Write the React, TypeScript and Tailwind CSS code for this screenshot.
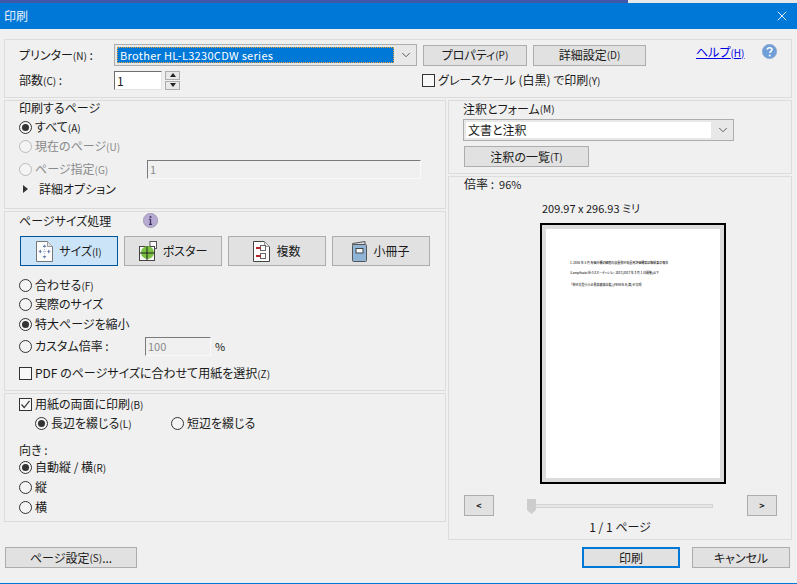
import type { ReactNode } from "react";
import { ChevronDown, X } from "lucide-react";

const Key = ({ children }: { children: ReactNode }) => (
  <span className="text-[10px]">{children}</span>
);

const Radio = ({ checked, disabled }: { checked?: boolean; disabled?: boolean }) => (
  <span
    className={`flex h-[13px] w-[13px] shrink-0 items-center justify-center rounded-full border bg-[#f4f4f4] ${
      disabled ? "border-[#bcbcbc]" : "border-[#333333]"
    }`}
  >
    {checked && <span className="h-[7px] w-[7px] rounded-full bg-[#333333]" />}
  </span>
);

const Checkbox = ({ checked }: { checked?: boolean }) => (
  <span className="flex h-[13px] w-[13px] shrink-0 items-center justify-center border border-[#333333] bg-[#f8f8f8]">
    {checked && (
      <svg width="11" height="11" viewBox="0 0 11 11" fill="none">
        <path d="M1.5 5.5 4.2 8.5 9.5 1.8" stroke="#333333" strokeWidth="1.2" />
      </svg>
    )}
  </span>
);

const Button = ({
  children,
  className,
  primary,
}: {
  children: ReactNode;
  className: string;
  primary?: boolean;
}) => (
  <button
    className={`flex items-center justify-center bg-[#e1e1e1] text-[#1a1a1a] ${
      primary ? "border-2 border-[#0078d7]" : "border border-[#adadad]"
    } ${className}`}
  >
    {children}
  </button>
);

const SizeIcon = () => (
  <svg width="17" height="21" viewBox="0 0 17 21" fill="none">
    <path d="M.5.5h11l5 5v15H.5z" fill="#fbfbfb" stroke="#777777" />
    <path d="M11.5.5v5h5" fill="#e4e4e4" stroke="#999999" />
    <path
      d="M8.5 6v9M5 10.5h7"
      stroke="#9aa8c4"
      strokeWidth=".7"
      strokeDasharray="1 1"
    />
    <path
      d="M6.5 6l2-2.5 2 2.5zM6.5 15l2 2.5 2-2.5zM5 8.5l-2.5 2 2.5 2zM12 8.5l2.5 2-2.5 2z"
      fill="#6f83ad"
    />
  </svg>
);

const PosterIcon = () => (
  <svg width="18" height="20" viewBox="0 0 18 20" fill="none">
    <rect x="11" y=".5" width="6.5" height="7" fill="#fafafa" stroke="#555555" />
    <rect x=".5" y="5.5" width="15" height="14" fill="#fafafa" stroke="#444444" />
    <circle cx="8.5" cy="11.5" r="6.5" fill="#7cc242" />
    <path d="M8 5.5v14M.5 12h15" stroke="#222222" />
  </svg>
);

const MultipleIcon = () => (
  <svg width="17" height="21" viewBox="0 0 17 21" fill="none">
    <path d="M.5.5h11l5 5v15H.5z" fill="#fbfbfb" stroke="#444444" />
    <path d="M11.5.5v5h5" fill="#e4e4e4" stroke="#999999" />
    <rect x="7.5" y="4.5" width="5" height="5" fill="#fff" stroke="#666666" />
    <rect x="7.5" y="12.5" width="5" height="5" fill="#fff" stroke="#666666" />
    <path d="M3 7h5M3 15h5" stroke="#b3272d" strokeWidth="2" />
  </svg>
);

const BookletIcon = () => (
  <svg width="15" height="21" viewBox="0 0 15 21" fill="none">
    <path d="M.5 2.5 13 .5v3H.5z" fill="#d8dde2" stroke="#555555" />
    <rect x=".5" y="3.5" width="14" height="17" rx="1" fill="#8fb4d6" stroke="#555555" />
    <rect x="4" y="7.5" width="7" height="4.5" fill="#f4f8fb" stroke="#444444" />
  </svg>
);

const SelectBox = ({ children, className }: { children: ReactNode; className: string }) => (
  <div className={`flex h-[22px] items-center border border-[#adadad] bg-[#e8e8e8] ${className}`}>
    <div className="min-w-0 flex-1 self-stretch p-[2px]">{children}</div>
    <ChevronDown className="mx-[3px] h-[14px] w-[14px] text-[#555555]" strokeWidth={1.6} />
  </div>
);

const ModeTab = ({
  icon,
  active,
  children,
}: {
  icon: ReactNode;
  active?: boolean;
  children: ReactNode;
}) => (
  <button
    className={`flex h-[30px] w-[98px] items-center justify-center gap-[6px] border text-[#1a1a1a] ${
      active ? "border-[#005499] bg-[#cce4f7]" : "border-[#adadad] bg-[#e1e1e1]"
    }`}
  >
    {icon}
    <span>{children}</span>
  </button>
);

export default function App() {
  return (
    <div
      className='flex h-[584px] w-[797px] flex-col overflow-hidden bg-[#f0f0f0] text-[12px] leading-[14px] text-[#1a1a1a] [font-feature-settings:"palt"]'
      style={{ fontFamily: '"Noto Sans CJK JP", "Noto Sans", sans-serif' }}
    >
      <div className="flex h-[3px] shrink-0 bg-[#e9e9e9]">
        <div className="w-[628px] bg-[#3f58a9]" />
      </div>
      <div className="flex h-[26px] shrink-0 items-center justify-between bg-[#0078d7] pl-1 pr-[7px] text-[#e8f2fb]">
        <span>印刷</span>
        <X className="h-[16px] w-[16px] text-white" strokeWidth={1.3} />
      </div>

      {/* printer row */}
      <div className="mx-1 mt-[10px] h-[59px] w-[788px] shrink-0 border border-[#dcdcdc]">
        <div className="mt-1 flex h-[22px] items-center pl-[14px]">
          <span className="w-[95px]">
            プリンター<Key>(N)</Key> :
          </span>
          <SelectBox className="w-[303px]">
            <div className="flex h-[16px] items-center border border-dotted border-[#e9a23b] bg-[#0078d7] pl-[2px] text-[11px] tracking-[0.3px] text-white">
              Brother HL-L3230CDW series
            </div>
          </SelectBox>
          <Button className="ml-[6px] h-[21px] w-[104px]">
            プロパティ<Key>(P)</Key>
          </Button>
          <Button className="ml-[6px] h-[21px] w-[113px]">
            詳細設定<Key>(D)</Key>
          </Button>
          <a className="ml-[50px] w-[46px] -translate-y-[3px] whitespace-nowrap text-[#0000e6] underline">
            ヘルプ<Key>(H)</Key>
          </a>
          <svg className="ml-[20px] -translate-y-[4px]" width="15" height="15" viewBox="0 0 15 15">
            <circle cx="7.5" cy="7.5" r="7.2" fill="#6f9fd8" stroke="#8aa6c8" strokeWidth=".6" />
            <path d="M5.2 5.6c.2-2.4 4.8-2.6 4.8 0 0 1.7-2.3 1.7-2.3 3.5" fill="none" stroke="#fff" strokeWidth="1.6" />
            <circle cx="7.7" cy="11.4" r="1" fill="#fff" />
          </svg>
        </div>
        <div className="mt-1 flex h-[20px] items-center pl-[14px]">
          <span className="w-[95px]">
            部数<Key>(C)</Key> :
          </span>
          <input
            readOnly
            value="1"
            className="h-[19px] w-[48px] border border-[#6d6d6d] border-b-[#e4e4e4] border-r-[#e4e4e4] bg-white pl-[2px] text-[12px] outline-none"
          />
          <div className="ml-[3px] flex w-[15px] flex-col gap-px">
            <span className="flex h-[9px] items-center justify-center border border-[#adadad] bg-[#e8e8e8]">
              <span className="h-0 w-0 border-x-[3.5px] border-b-[4px] border-x-transparent border-b-[#222222]" />
            </span>
            <span className="flex h-[9px] items-center justify-center border border-[#adadad] bg-[#e8e8e8]">
              <span className="h-0 w-0 border-x-[3.5px] border-t-[4px] border-x-transparent border-t-[#222222]" />
            </span>
          </div>
          <span className="ml-[242px] flex items-center gap-[3px]">
            <Checkbox />
            <span>
              グレースケール (白黒) で印刷<Key>(Y)</Key>
            </span>
          </span>
        </div>
      </div>

      <div className="mt-[2px] flex h-[440px] shrink-0 items-start gap-[2px] pl-1">
        {/* left column */}
        <div className="flex w-[442px] flex-col gap-[2px]">
          <section className="h-[109px] border border-[#dcdcdc] pl-[14px]">
            <div className="flex h-[14px] items-center">印刷するページ</div>
            <div className="mt-[5px] flex h-[14px] items-center gap-[3px]">
              <Radio checked />
              <span>
                すべて<Key>(A)</Key>
              </span>
            </div>
            <div className="mt-[5px] flex h-[14px] items-center gap-[3px] text-[#8a8a8a]">
              <Radio disabled />
              <span>
                現在のページ<Key>(U)</Key>
              </span>
            </div>
            <div className="mt-[9px] flex h-[14px] items-center text-[#8a8a8a]">
              <Radio disabled />
              <span className="ml-[3px] w-[112px]">
                ページ指定<Key>(G)</Key>
              </span>
              <input
                readOnly
                value="1"
                className="h-[19px] w-[274px] border border-[#7a7a7a] border-b-[#fafafa] border-r-[#fafafa] bg-[#f0f0f0] pl-[2px] text-[11px] text-[#8a8a8a] outline-none"
              />
            </div>
            <div className="mt-[6px] flex h-[14px] items-center pl-[4px]">
              <span className="h-0 w-0 border-y-[4px] border-l-[5px] border-y-transparent border-l-[#333333]" />
              <span className="ml-[11px]">詳細オプション</span>
            </div>
          </section>

          <section className="h-[180px] border border-[#dcdcdc] pl-[14px]">
            <div className="mt-[2px] flex h-[14px] items-center">
              <span className="w-[124px]">ページサイズ処理</span>
              <svg className="-translate-y-px" width="15" height="15" viewBox="0 0 15 15">
                <circle cx="7.5" cy="7.5" r="7.2" fill="#b6a9d2" stroke="#8d8d9c" strokeWidth=".6" />
                <path d="M7.5 6.3v5M6 11.4h3M6.2 6.4h1.5" stroke="#3d3560" strokeWidth="1.3" fill="none" />
                <circle cx="7.5" cy="4" r="1" fill="#3d3560" />
              </svg>
            </div>
            <div className="mt-[8px] flex h-[30px] gap-[6px] pl-px">
              <ModeTab active icon={<SizeIcon />}>
                サイズ<Key>(I)</Key>
              </ModeTab>
              <ModeTab icon={<PosterIcon />}>ポスター</ModeTab>
              <ModeTab icon={<MultipleIcon />}>複数</ModeTab>
              <ModeTab icon={<BookletIcon />}>小冊子</ModeTab>
            </div>
            <div className="mt-[12px] flex h-[14px] items-center gap-[3px]">
              <Radio />
              <span>
                合わせる<Key>(F)</Key>
              </span>
            </div>
            <div className="mt-[5px] flex h-[14px] items-center gap-[3px]">
              <Radio />
              <span>実際のサイズ</span>
            </div>
            <div className="mt-[6px] flex h-[14px] items-center gap-[3px]">
              <Radio checked />
              <span>特大ページを縮小</span>
            </div>
            <div className="mt-[8px] flex h-[14px] items-center">
              <Radio />
              <span className="ml-[3px] w-[110px]">カスタム倍率 :</span>
              <input
                readOnly
                value="100"
                className="h-[19px] w-[66px] border border-[#7a7a7a] border-b-[#fafafa] border-r-[#fafafa] bg-[#f0f0f0] pl-[2px] text-[11px] text-[#8a8a8a] outline-none"
              />
              <span className="ml-[4px] text-[11px]">%</span>
            </div>
            <div className="mt-[13px] flex h-[14px] items-center gap-[3px]">
              <Checkbox />
              <span>
                PDF のページサイズに合わせて用紙を選択<Key>(Z)</Key>
              </span>
            </div>
          </section>

          <section className="h-[129px] border border-[#dcdcdc] pl-[14px]">
            <div className="mt-[3px] flex h-[14px] items-center gap-[3px]">
              <Checkbox checked />
              <span>
                用紙の両面に印刷<Key>(B)</Key>
              </span>
            </div>
            <div className="mt-[5px] flex h-[14px] items-center pl-4">
              <Radio checked />
              <span className="ml-[3px] w-[120px]">
                長辺を綴じる<Key>(L)</Key>
              </span>
              <Radio />
              <span className="ml-[3px]">短辺を綴じる</span>
            </div>
            <div className="mt-[13px] flex h-[14px] items-center">向き :</div>
            <div className="mt-[3px] flex h-[14px] items-center gap-[3px]">
              <Radio checked />
              <span>
                自動縦 / 横<Key>(R)</Key>
              </span>
            </div>
            <div className="mt-[6px] flex h-[14px] items-center gap-[3px]">
              <Radio />
              <span>縦</span>
            </div>
            <div className="mt-[6px] flex h-[14px] items-center gap-[3px]">
              <Radio />
              <span>横</span>
            </div>
          </section>
        </div>

        {/* right column */}
        <div className="flex w-[344px] flex-col gap-[2px]">
          <section className="h-[74px] border border-[#dcdcdc] pl-[14px]">
            <div className="mt-px flex h-[14px] items-center">
              注釈とフォーム<Key>(M)</Key>
            </div>
            <SelectBox className="mt-[3px] w-[271px]">
              <div className="flex h-[16px] items-center bg-white pl-[2px]">文書と注釈</div>
            </SelectBox>
            <Button className="mt-[5px] ml-px h-[21px] w-[125px]">
              注釈の一覧<Key>(T)</Key>
            </Button>
          </section>

          <section className="h-[364px] border border-[#dcdcdc]">
            <div className="flex h-[14px] items-center pl-[15px] text-[11px]">
              <span className="text-[12px]">倍率 :</span>
              <span className="ml-[5px]">96%</span>
            </div>
            <div className="mt-[10px] flex h-[14px] items-center pl-[93px] text-[11px]">
              209.97 x 296.93 ミリ
            </div>
            <div className="mt-[8px] ml-[91px] h-[261px] w-[186px] border-2 border-black bg-[#dcdcdc] p-1">
              <div className="flex h-full flex-col bg-white pl-6 pt-[32px] text-[3px] leading-[4px] font-medium whitespace-nowrap text-[#222222]">
                <p>1、2016 年 5 月 有価升機の細胞内容量測定装置用評価機器試験結果の報告</p>
                <p className="mt-[6px]">[LampAssist 社クスオーディション 2017(2017 年 3 月 1 日開催)以下</p>
                <p className="mt-[8px] pl-px">「特定大型小小企業振興協会製」(YKHEN-R/第」を実現</p>
              </div>
            </div>
            <div className="mt-[11px] flex h-[21px] items-center pl-[15px]">
              <Button className="h-[21px] w-[30px] text-[9px] font-bold">&lt;</Button>
              <div className="relative ml-[33px] h-[4px] w-[186px] border border-[#d4d4d4] bg-[#e6e6e6]">
                <svg className="absolute -top-[6px] -left-px" width="9" height="15" viewBox="0 0 9 15">
                  <path d="M0 0h9v11l-4.5 4L0 11z" fill="#cdcdcd" />
                </svg>
              </div>
              <Button className="ml-[34px] h-[21px] w-[30px] text-[9px] font-bold">&gt;</Button>
            </div>
            <div className="mt-1 flex h-[14px] items-center justify-center">1 / 1 ページ</div>
          </section>
        </div>
      </div>

      <div className="mt-[7px] flex h-[21px] shrink-0 pl-[5px]">
        <Button className="w-[132px]">
          ページ設定<Key>(S)</Key>...
        </Button>
        <Button primary className="ml-[445px] w-[98px]">
          印刷
        </Button>
        <Button className="ml-[12px] w-[98px]">キャンセル</Button>
      </div>
      <div className="mt-[15px] h-px shrink-0 bg-[#0078d7]" />
    </div>
  );
}
